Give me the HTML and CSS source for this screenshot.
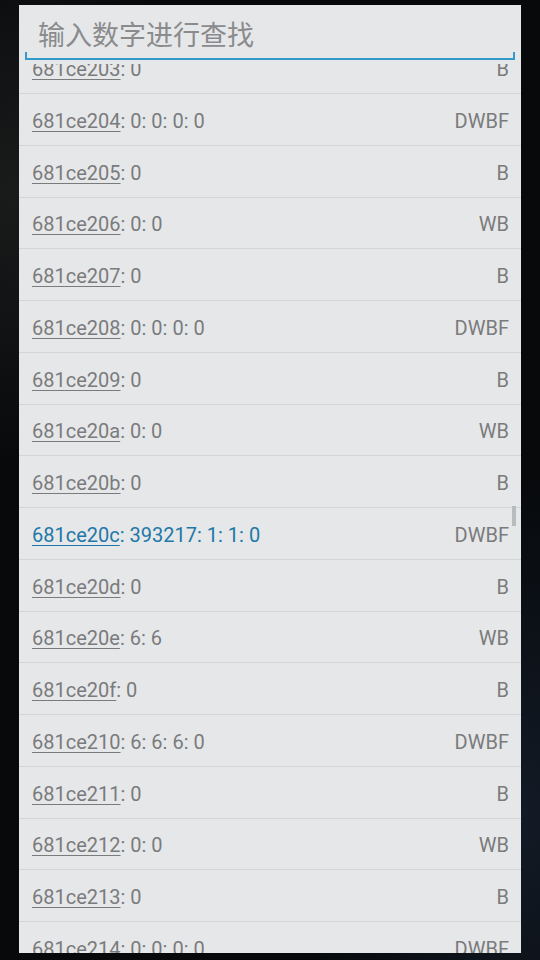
FILE: index.html
```html
<!DOCTYPE html>
<html lang="zh">
<head>
<meta charset="utf-8">
<title>查找</title>
<link rel="stylesheet" href="styles.css">
</head>
<body>
<div class="screen">
  <div class="dialog">
    <div class="header">
      <div class="field">
        <input class="search" type="text" placeholder="输入数字进行查找">
      </div>
    </div>
    <div class="list">
      <div class="rows">
        <div class="row"><span class="left"><span class="addr">681ce203</span>: 0</span><span class="type">B</span></div>
        <div class="row"><span class="left"><span class="addr">681ce204</span>: 0: 0: 0: 0</span><span class="type">DWBF</span></div>
        <div class="row"><span class="left"><span class="addr">681ce205</span>: 0</span><span class="type">B</span></div>
        <div class="row"><span class="left"><span class="addr">681ce206</span>: 0: 0</span><span class="type">WB</span></div>
        <div class="row"><span class="left"><span class="addr">681ce207</span>: 0</span><span class="type">B</span></div>
        <div class="row"><span class="left"><span class="addr">681ce208</span>: 0: 0: 0: 0</span><span class="type">DWBF</span></div>
        <div class="row"><span class="left"><span class="addr">681ce209</span>: 0</span><span class="type">B</span></div>
        <div class="row"><span class="left"><span class="addr">681ce20a</span>: 0: 0</span><span class="type">WB</span></div>
        <div class="row"><span class="left"><span class="addr">681ce20b</span>: 0</span><span class="type">B</span></div>
        <div class="row active"><span class="left"><span class="addr">681ce20c</span>: 393217: 1: 1: 0</span><span class="type">DWBF</span></div>
        <div class="row"><span class="left"><span class="addr">681ce20d</span>: 0</span><span class="type">B</span></div>
        <div class="row"><span class="left"><span class="addr">681ce20e</span>: 6: 6</span><span class="type">WB</span></div>
        <div class="row"><span class="left"><span class="addr">681ce20f</span>: 0</span><span class="type">B</span></div>
        <div class="row"><span class="left"><span class="addr">681ce210</span>: 6: 6: 6: 0</span><span class="type">DWBF</span></div>
        <div class="row"><span class="left"><span class="addr">681ce211</span>: 0</span><span class="type">B</span></div>
        <div class="row"><span class="left"><span class="addr">681ce212</span>: 0: 0</span><span class="type">WB</span></div>
        <div class="row"><span class="left"><span class="addr">681ce213</span>: 0</span><span class="type">B</span></div>
        <div class="row"><span class="left"><span class="addr">681ce214</span>: 0: 0: 0: 0</span><span class="type">DWBF</span></div>
      </div>
      <div class="scrollbar"></div>
    </div>
  </div>
</div>
</body>
</html>
```

FILE: styles.css
```css
html, body {
  margin: 0;
  padding: 0;
}

body {
  background: #07090b;
  font-family: Roboto, "Noto Sans CJK SC", sans-serif;
}

.screen {
  width: 540px;
  height: 960px;
  padding: 5px 19px 7px 19px;
  box-sizing: border-box;
  background:
    radial-gradient(ellipse at 95% 85%, rgba(40, 60, 90, 0.35), transparent 30%),
    radial-gradient(ellipse at 3% 20%, rgba(60, 62, 58, 0.35), transparent 25%),
    #07090b;
}

.dialog {
  height: 948px;
  background: #e6e7e9;
  display: flex;
  flex-direction: column;
  overflow: hidden;
}

.header {
  height: 59px;
  flex: none;
  padding: 0 6px;
  box-sizing: border-box;
}

.field {
  position: relative;
  height: 53px;
  border-bottom: 2px solid #3399c8;
  box-sizing: content-box;
}

.field::before,
.field::after {
  content: "";
  position: absolute;
  bottom: 0;
  width: 2px;
  height: 6px;
  background: #3399c8;
}

.field::before { left: 0; }
.field::after { right: 0; }

.search {
  display: block;
  width: 100%;
  height: 53px;
  margin: 0;
  padding: 4px 13px 0 13px;
  box-sizing: border-box;
  border: none;
  outline: none;
  background: transparent;
  font-family: "Noto Sans CJK SC", sans-serif;
  font-size: 27px;
  color: #6e6e6e;
}

.search::placeholder {
  color: #8a8b8c;
}

.list {
  position: relative;
  flex: 1;
  overflow: hidden;
}

.rows {
  margin-top: -21.75px;
}

.row {
  height: 51.75px;
  box-sizing: border-box;
  border-bottom: 1px solid #d2d4d6;
  display: flex;
  align-items: center;
  justify-content: space-between;
  padding: 3px 12px 0 13px;
  font-size: 20px;
  color: #7a7b7c;
}

.addr {
  text-decoration: underline;
  text-underline-offset: 3px;
  text-decoration-thickness: 1px;
}

.row.active .left {
  color: #2178a8;
}

.scrollbar {
  position: absolute;
  right: 5px;
  top: 442px;
  width: 4px;
  height: 20px;
  background: #b9bbbd;
}
```
